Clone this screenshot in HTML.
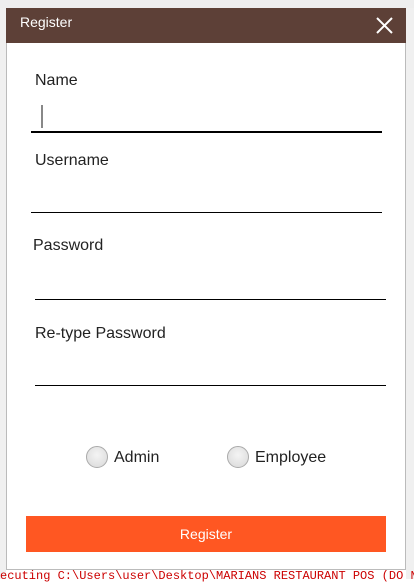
<!DOCTYPE html>
<html><head><style>
body{margin:0;width:414px;height:579px;background:#fff;position:relative;overflow:hidden;font-family:"Liberation Sans",sans-serif}
.a{position:absolute}
.lbl{position:absolute;font-size:16px;color:#222}
.line{position:absolute;background:#000}
.radio{position:absolute;width:20px;height:20px;border-radius:50%;border:1px solid #aaa;background:radial-gradient(circle at 50% 40%,#f4f4f4,#d8d8d8)}
</style></head><body>
<div class="a" style="left:0;top:0;width:414px;height:8px;background:#eee"></div>
<div class="a" style="left:0;top:8px;width:6px;height:571px;background:#f0f0f0"></div>
<div class="a" style="left:406px;top:8px;width:8px;height:571px;background:#f0f0f0"></div>
<div class="a" style="left:6px;top:8px;width:398px;height:561px;background:#fff;border:1px solid #bbb;border-top:none"></div>
<div class="a" style="left:6px;top:8px;width:400px;height:35px;background:#5D4037"></div>
<div class="a" style="left:20px;top:14px;color:#fff;font-size:14px">Register</div>
<svg class="a" style="left:376px;top:17px" width="17" height="17"><path d="M1 1L16 16M16 1L1 16" stroke="#fff" stroke-width="2"/></svg>
<div class="lbl" style="left:35px;top:72px">Name</div>
<div class="a" style="left:41px;top:105px;width:2px;height:23px;background:#888"></div>
<div class="line" style="left:31px;top:131px;width:351px;height:2px"></div>
<div class="lbl" style="left:35px;top:152px">Username</div>
<div class="line" style="left:31px;top:212px;width:351px;height:1px"></div>
<div class="lbl" style="left:33px;top:237px">Password</div>
<div class="line" style="left:35px;top:299px;width:351px;height:1px"></div>
<div class="lbl" style="left:35px;top:325px">Re-type Password</div>
<div class="line" style="left:35px;top:385px;width:351px;height:1px"></div>
<div class="radio" style="left:86px;top:446px"></div>
<div class="lbl" style="left:114px;top:449px;font-size:16px">Admin</div>
<div class="radio" style="left:227px;top:446px"></div>
<div class="lbl" style="left:255px;top:449px;font-size:16px">Employee</div>
<div class="a" style="left:26px;top:516px;width:360px;height:36px;background:#FF5722;color:#fff;font-size:14px;text-align:center;line-height:36px">Register</div>
<div class="a" style="left:0px;top:569px;font-family:'Liberation Mono',monospace;font-size:12px;color:#c00;white-space:nowrap">ecuting C:\Users\user\Desktop\MARIANS RESTAURANT POS (DO NOT</div>
</body></html>
